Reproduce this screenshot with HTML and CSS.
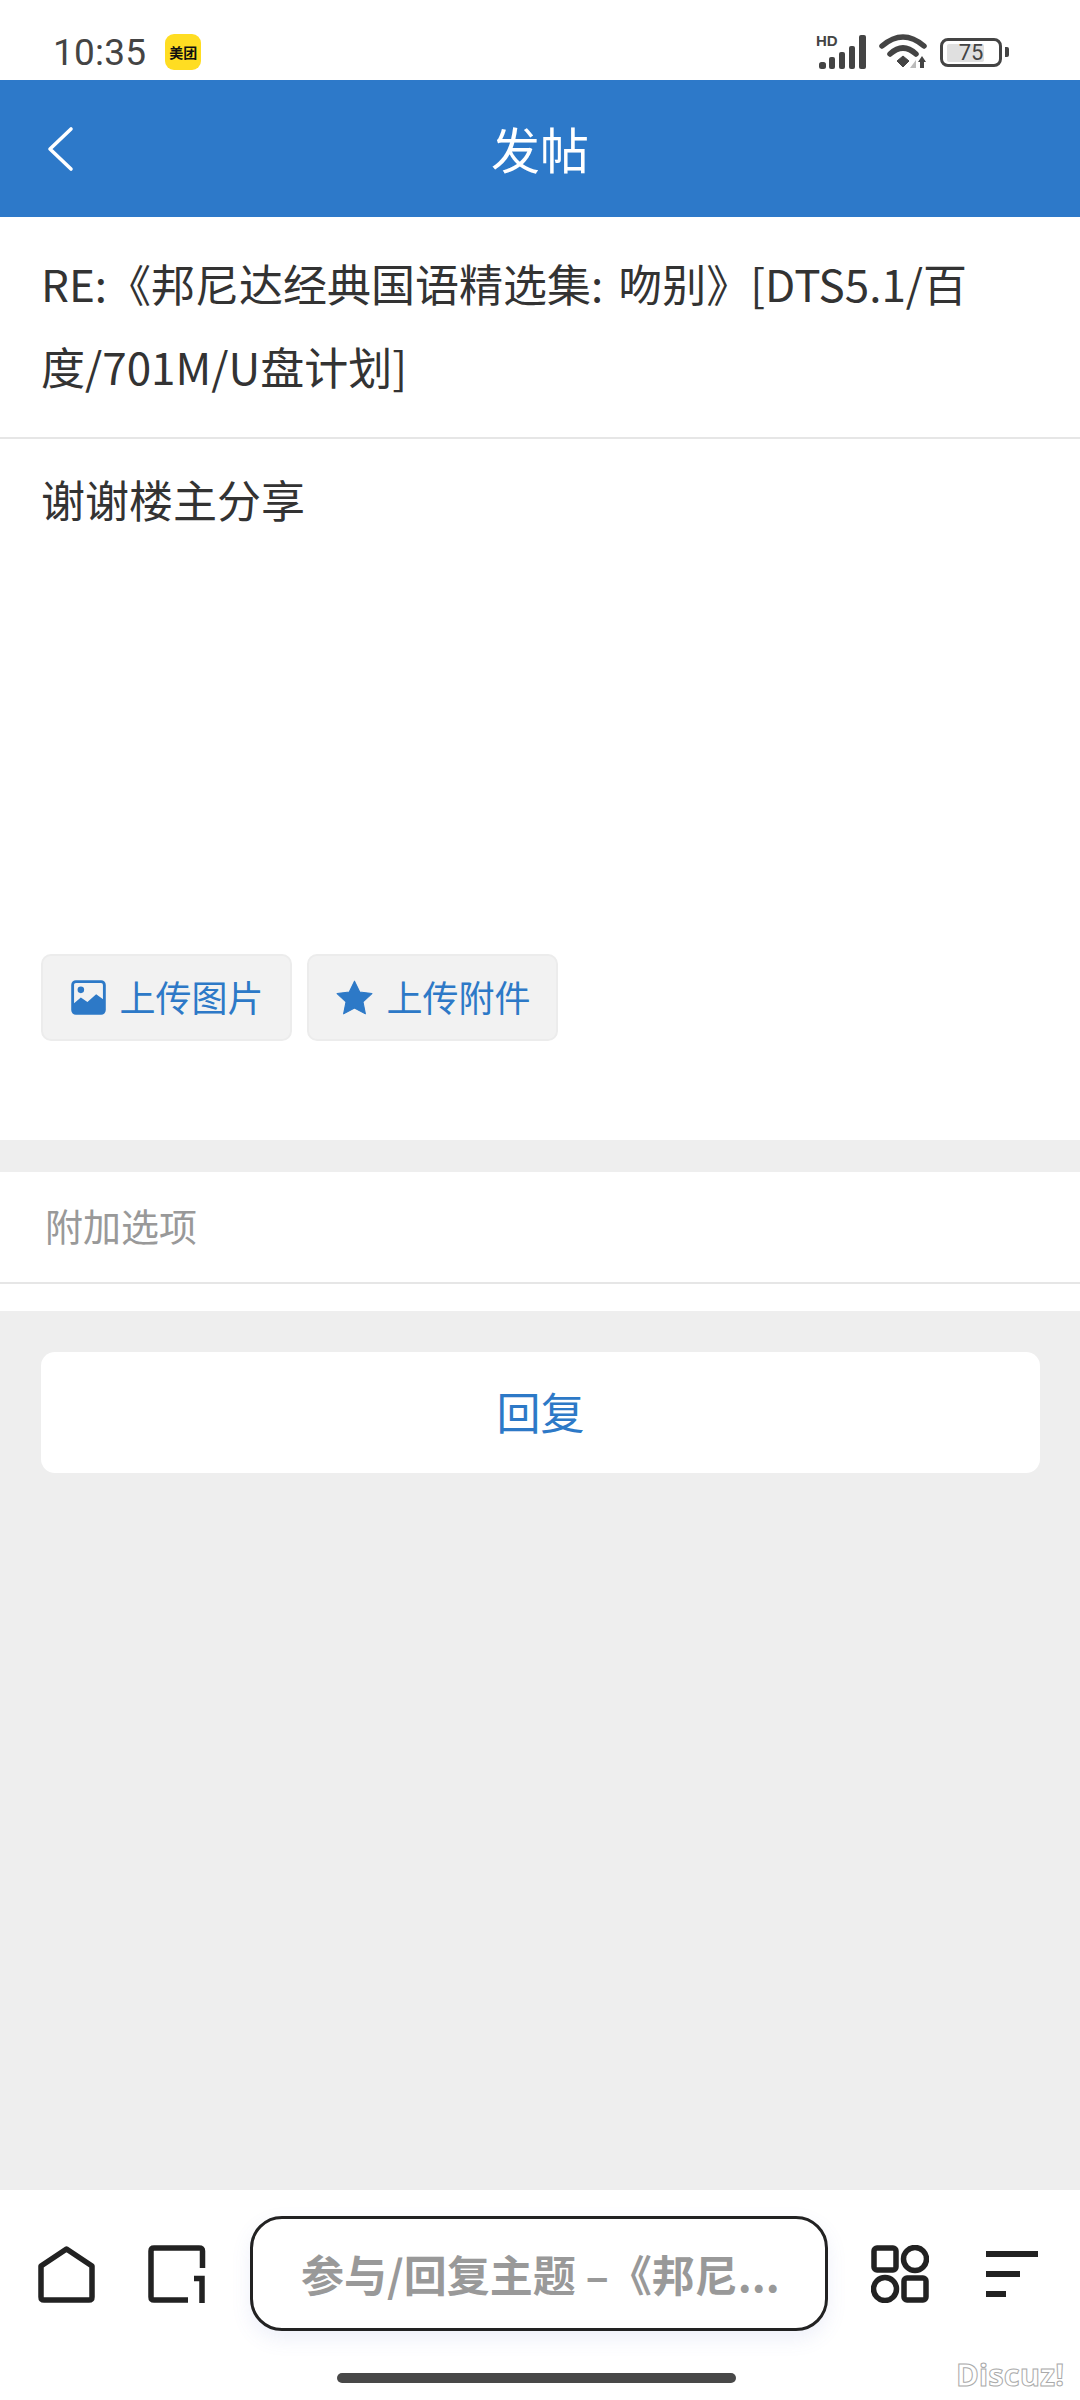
FILE: index.html
```html
<!DOCTYPE html>
<html lang="zh">

<head>
    <meta charset="utf-8">
    <title>发帖</title>
    <link rel="stylesheet" href="styles.css">
</head>

<body>
    <div class="status-bar">
        <span class="clock">10:35</span>
        <span class="app-badge">美团</span>
        <span class="status-right">
            <svg class="status-signal" viewBox="0 0 50 34" width="50" height="34">
                <text x="0" y="11" class="hd-text">HD</text>
                <rect x="3" y="27" width="7" height="7" rx="2.5" fill="#444"/>
                <rect x="13" y="22" width="6" height="12" rx="2" fill="#444"/>
                <rect x="23" y="17" width="6" height="17" rx="2" fill="#444"/>
                <rect x="33" y="11" width="6" height="23" rx="2" fill="#444"/>
                <rect x="43" y="0" width="7" height="34" rx="2" fill="#444"/>
            </svg>
            <svg class="status-wifi" viewBox="0 0 48 36" width="48" height="36">
                <path d="M3 12 Q24 -6 45 12" fill="none" stroke="#444" stroke-width="5.5" stroke-linecap="round"/>
                <path d="M11 20 Q24 8 37 20" fill="none" stroke="#444" stroke-width="5.5" stroke-linecap="round"/>
                <path d="M18 27 L24 22 L30 27 L24 33 Z" fill="#444" stroke="#444" stroke-linejoin="round"/>
                <path d="M37 26 V34 H31 Z" fill="#bbb"/>
                <path d="M43 22 L47 28 H45 V34 H41 V28 H39 Z" fill="#444"/>
            </svg>
            <span class="battery">
                <span class="battery-level"></span>
                <span class="battery-num">75</span>
            </span>
            <span class="battery-tip"></span>
        </span>
    </div>

    <div class="header">
        <svg class="back-icon" viewBox="0 0 30 48" width="30" height="48">
            <path d="M26 4 L5 24 L26 44" fill="none" stroke="#fff" stroke-width="3.6" stroke-linecap="round" stroke-linejoin="round"/>
        </svg>
        <span class="header-title">发帖</span>
    </div>

    <div class="subject">RE:《邦尼达经典国语精选集: 吻别》[DTS5.1/百度/701M/U盘计划]</div>

    <div class="editor">
        <div class="message">谢谢楼主分享</div>
        <div class="upload-row">
            <div class="upload-btn">
                <svg viewBox="0 0 32 32" width="35" height="35">
                    <rect x="1.5" y="1.5" width="29" height="29" rx="3" fill="none" stroke="#2d79c7" stroke-width="2.6"/>
                    <circle cx="9" cy="9" r="3" fill="#2d79c7"/>
                    <path d="M2 22 L9 16 L15 20 L23 13 L30 18 V28 Q30 30 28 30 H4 Q2 30 2 28 Z" fill="#2d79c7"/>
                </svg>
                <span class="upload-label">上传图片</span>
            </div>
            <div class="upload-btn">
                <svg viewBox="0 0 34 32" width="37" height="35">
                    <path d="M17 1 L21.8 11 L33 12.4 L24.8 20 L27 31 L17 25.6 L7 31 L9.2 20 L1 12.4 L12.2 11 Z" fill="#2d79c7" stroke="#2d79c7" stroke-width="1" stroke-linejoin="round"/>
                </svg>
                <span class="upload-label">上传附件</span>
            </div>
        </div>
    </div>

    <div class="options">
        <div class="options-row">附加选项</div>
    </div>

    <div class="submit-area">
        <div class="submit-btn">回复</div>
    </div>

    <div class="dock">
        <div class="bottom-bar">
            <svg class="bar-icon home-icon" viewBox="0 0 58 58" width="58" height="58">
                <path d="M29.5 4 L55 21 V52 Q55 55 52 55 H7 Q4 55 4 52 V21 Z" fill="none" stroke="#222" stroke-width="5.5" stroke-linejoin="round"/>
            </svg>
            <svg class="bar-icon" viewBox="0 0 58 58" width="58" height="58">
                <path d="M40 55 H6 Q3 55 3 52 V6 Q3 3 6 3 H51 Q54.5 3 54.5 6 V23" fill="none" stroke="#222" stroke-width="5.5"/>
                <path d="M46 33.5 H54 V58" fill="none" stroke="#222" stroke-width="5.5"/>
            </svg>
            <div class="reply-box">参与/回复主题 –《邦尼...</div>
            <svg class="bar-icon" viewBox="0 0 58 58" width="58" height="58">
                <rect x="3" y="3" width="22" height="22" rx="3" fill="none" stroke="#222" stroke-width="5.5"/>
                <circle cx="44" cy="14" r="11.5" fill="none" stroke="#222" stroke-width="5.5"/>
                <circle cx="14" cy="44" r="11.5" fill="none" stroke="#222" stroke-width="5.5"/>
                <rect x="33" y="33" width="22" height="22" rx="3" fill="none" stroke="#222" stroke-width="5.5"/>
            </svg>
            <svg class="bar-icon" viewBox="0 0 52 46" width="52" height="46">
                <rect x="0" y="0" width="52" height="6" fill="#222"/>
                <rect x="0" y="20" width="34" height="6" fill="#222"/>
                <rect x="0" y="40" width="20" height="6" fill="#222"/>
            </svg>
        </div>
        <div class="home-area">
            <span class="home-pill"></span>
            <span class="watermark">Discuz!</span>
        </div>
    </div>
</body>

</html>
```

FILE: styles.css
```css
* {
    box-sizing: border-box;
}
html, body {
    margin: 0;
    padding: 0;
}
body {
    width: 1080px;
    height: 2400px;
    display: flex;
    flex-direction: column;
    background: #eee;
    font-family: "Noto Sans CJK SC", "Noto Sans", sans-serif;
    color: #333;
}

/* status bar */
.status-bar {
    height: 80px;
    background: #fff;
    display: flex;
    align-items: center;
    padding: 24px 71px 0 53px;
}
.clock {
    font-family: Roboto, sans-serif;
    font-size: 37px;
    letter-spacing: 0.2px;
    color: #444;
}
.app-badge {
    width: 36px;
    height: 36px;
    margin-left: 19px;
    border-radius: 9px;
    background: #ffdd22;
    color: #111;
    font-size: 14px;
    font-weight: 700;
    line-height: 36px;
    text-align: center;
    white-space: nowrap;
}
.status-right {
    margin-left: auto;
    display: flex;
    align-items: center;
}
.status-signal {
    margin-right: 13px;
}
.hd-text {
    font-family: "Liberation Sans", sans-serif;
    font-size: 15px;
    font-weight: 700;
    fill: #444;
}
.status-wifi {
    margin-right: 13px;
}
.battery {
    position: relative;
    width: 62px;
    height: 29px;
    border: 3px solid #444;
    border-radius: 8px;
}
.battery-level {
    position: absolute;
    left: 4px;
    top: 3px;
    bottom: 2px;
    width: 37px;
    border-radius: 2px;
    background: #e0e0e0;
}
.battery-num {
    position: absolute;
    left: 0;
    right: 0;
    top: -1px;
    text-align: center;
    font-family: Roboto, sans-serif;
    font-size: 22px;
    line-height: 26px;
    color: #444;
}
.battery-tip {
    width: 4px;
    height: 10px;
    margin-left: 3px;
    border-radius: 0 2px 2px 0;
    background: #444;
}

/* header */
.header {
    position: relative;
    height: 137px;
    background: #2d79c9;
    display: flex;
    align-items: center;
    justify-content: center;
    padding-bottom: 3px;
    color: #fff;
    font-size: 49px;
}
.back-icon {
    position: absolute;
    left: 45px;
    top: 45px;
}

/* form */
.subject {
    height: 222px;
    padding: 25px 40px 0 41px;
    background: #fff;
    border-bottom: 2px solid #e6e6e6;
    font-size: 44px;
    line-height: 83px;
    word-spacing: 5px;
    color: #333;
}
.editor {
    height: 701px;
    padding: 28px 40px 0 41px;
    background: #fff;
    display: flex;
    flex-direction: column;
}
.message {
    font-size: 44px;
    line-height: 64px;
    color: #333;
}
.upload-row {
    display: flex;
    gap: 15px;
    margin-top: 423px;
}
.upload-btn {
    width: 251px;
    height: 87px;
    display: flex;
    align-items: center;
    justify-content: center;
    gap: 13px;
    padding-left: 2px;
    background: #f2f2f2;
    border: 2px solid #ececec;
    border-radius: 10px;
    font-size: 36px;
    color: #2d79c7;
}
.upload-label {
    padding-bottom: 4px;
}
.options {
    height: 139px;
    margin-top: 32px;
    background: #fff;
}
.options-row {
    height: 112px;
    padding-left: 45px;
    border-bottom: 2px solid #e6e6e6;
    font-size: 38px;
    line-height: 106px;
    color: #999;
}
.submit-area {
    flex: 1;
    padding: 41px 40px 0 41px;
}
.submit-btn {
    height: 121px;
    background: #fff;
    border-radius: 14px;
    font-size: 44px;
    line-height: 119px;
    text-align: center;
    color: #2d79c7;
}

/* bottom bar */
.dock {
    height: 210px;
    background: #fff;
}
.bottom-bar {
    height: 145px;
    display: flex;
    align-items: center;
    padding: 22px 0 0 37px;
}
.bar-icon {
    flex: none;
}
.home-icon {
    margin-right: 53px;
}
.reply-box {
    flex: none;
    width: 578px;
    height: 115px;
    margin: 0 43px 0 44px;
    padding-left: 48px;
    background: #fff;
    border: 3px solid #222;
    border-radius: 32px;
    box-shadow: 0 8px 20px rgba(90, 110, 200, 0.1);
    font-size: 43px;
    font-weight: 700;
    line-height: 109px;
    color: #999;
    white-space: nowrap;
}
.bar-icon:last-child {
    margin-left: 57px;
}
.home-area {
    position: relative;
    display: flex;
    justify-content: center;
    padding-top: 38px;
}
.home-pill {
    width: 399px;
    height: 10px;
    margin-right: 7px;
    border-radius: 6px;
    background: #484848;
}
.watermark {
    position: absolute;
    right: 16px;
    top: 18px;
    font-family: "Open Sans", sans-serif;
    font-size: 31px;
    font-weight: 700;
    color: #fff;
    -webkit-text-stroke: 1px #aaa;
}
```
